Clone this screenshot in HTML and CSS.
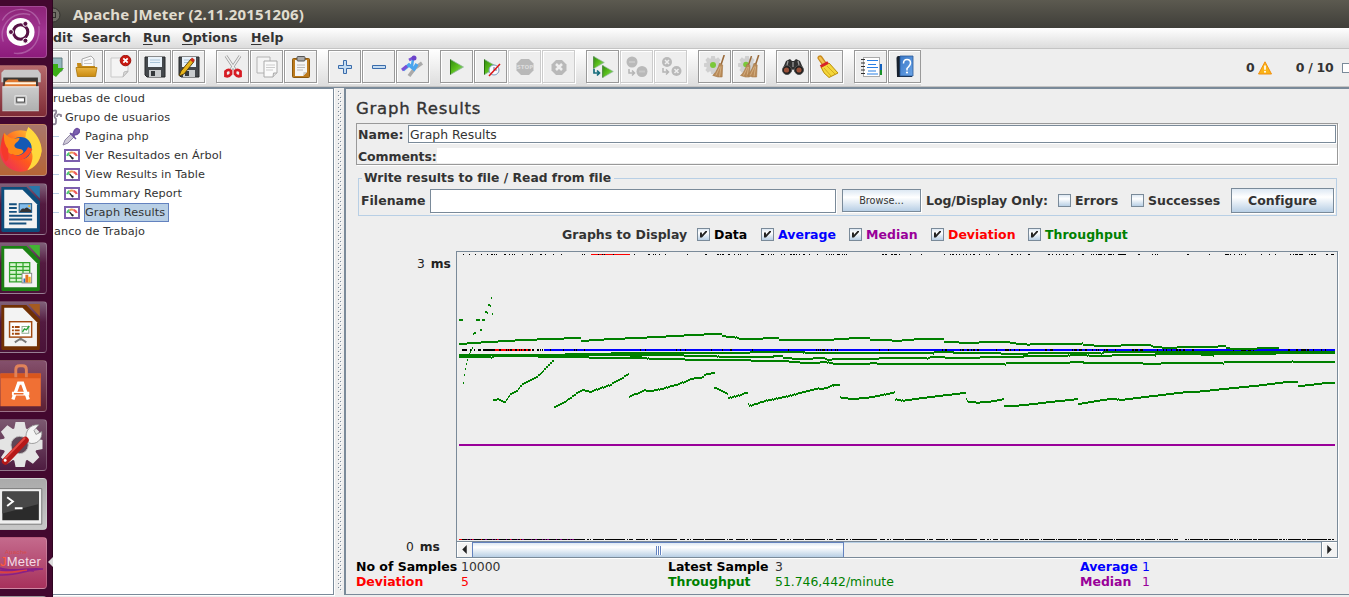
FILE: index.html
```html
<!DOCTYPE html>
<html lang="es">
<head>
<meta charset="utf-8">
<title>Apache JMeter (2.11.20151206)</title>
<link rel="stylesheet" href="styles.css">
</head>
<body>
<svg width="0" height="0" class="defs">
  <defs>
    <linearGradient id="gGreen" x1="0" y1="0" x2="1" y2="1"><stop offset="0" stop-color="#2f8a10"/><stop offset=".5" stop-color="#5cc01c"/><stop offset="1" stop-color="#9ad0a0"/></linearGradient>
    <linearGradient id="gFolder" x1="0" y1="0" x2="0" y2="1"><stop offset="0" stop-color="#eab544"/><stop offset="1" stop-color="#c98a10"/></linearGradient>
    <linearGradient id="gMetal" x1="0" y1="0" x2="0" y2="1"><stop offset="0" stop-color="#f2f2f2"/><stop offset="1" stop-color="#c4c4c4"/></linearGradient>
    <linearGradient id="gFox" x1="0" y1="1" x2="1" y2="0"><stop offset="0" stop-color="#e8226a"/><stop offset=".45" stop-color="#ff5a1c"/><stop offset="1" stop-color="#ffe03a"/></linearGradient>
    <linearGradient id="gBook" x1="0" y1="0" x2="1" y2="1"><stop offset="0" stop-color="#3a78c8"/><stop offset="1" stop-color="#6ba4e6"/></linearGradient>
    <pattern id="bumps" width="4" height="4" patternUnits="userSpaceOnUse"><path d="M0 0h1v1H0zM2 2h1v1H2z" fill="#7a8a99"/><path d="M1 1h1v1H1zM3 3h1v1H3z" fill="#fff"/></pattern>
    <symbol id="play" viewBox="0 0 14 16"><path d="M.5.5 13.5 8 .5 15.500z" fill="url(#gGreen)" stroke="#8fb89a" stroke-width=".8"/><path d="M.5 .5V15.500" stroke="#28700c" stroke-width="1"/></symbol>
    <symbol id="gauge" viewBox="0 0 16 13"><rect x="1" y="1" width="14" height="11" fill="#fff" stroke="#7d5fae" stroke-width="2"/><path d="M3.200 7A5 5 0 0 1 5.500 4" stroke="#4cc870" stroke-width="2.200" fill="none"/><path d="M5.500 4.200A5 5 0 0 1 9.500 3.900" stroke="#ee9a54" stroke-width="2" fill="none"/><path d="M9.500 3.900A5 5 0 0 1 12.800 7" stroke="#f05a5a" stroke-width="2.200" fill="none"/><path d="M5.500 6 8.500 9.500" stroke="#222" stroke-width="1.200"/><circle cx="8.600" cy="9.300" r="1.100" fill="#222"/></symbol>
    <symbol id="broom" viewBox="0 0 12 22"><path d="M11 0 8 9" stroke="#9a6a3a" stroke-width="1.500"/><path d="M6.500 8 9.500 9.500 9 21 5 21 0 19.500C3 17 5.500 12 6.500 8z" fill="#b98a58" stroke="#a57a48" stroke-width=".6"/><path d="M7 11 3 19.500M8 11 6.500 20.500" stroke="#dcbc90" stroke-width=".7"/></symbol>
    <symbol id="cog" viewBox="-10 -10 20 20"><g stroke="none"><circle r="7.500"/><path d="M-2-10h4l.8 4h-5.600zM-2 10h4l.8-4h-5.600zM-10-2v4l4 .8v-5.600zM10-2v4l-4 .8v-5.600z"/><path transform="rotate(45)" d="M-2-10h4l.8 4h-5.600zM-2 10h4l.8-4h-5.600zM-10-2v4l4 .8v-5.600zM10-2v4l-4 .8v-5.600z"/></g></symbol>
    <symbol id="floppy" viewBox="0 0 22 22"><path d="M1 1h20v20H3l-2-2z" fill="#44484c" stroke="#26282a"/><rect x="4" y="1" width="14" height="10" fill="#e9f2fa"/><path d="M6 4h10M6 6.500h10" stroke="#a9c4d8"/><path d="M5 14h12v7H5z" fill="#c9ccce"/><path d="M7 15h4v5H7z" fill="#35393c"/></symbol>
  </defs>
</svg>
<div class="screen">
  <nav class="launcher">
    <svg class="tile dash" viewBox="0 0 47 52"><path d="M3 36C-2 20 12 3 31 8M40 20c2 20-12 30-26 28M2 14C10-2 36-2 41 18" fill="none" stroke="#c88bc4" stroke-width="1.500" opacity=".5"/><circle cx="21" cy="26" r="14.500" fill="#fff"/><circle cx="21" cy="26" r="7.500" fill="none" stroke="#571245" stroke-width="3.200"/><g fill="#571245" stroke="#fff" stroke-width="1"><circle cx="11" cy="26" r="2.600"/><circle cx="26" cy="17.500" r="2.600"/><circle cx="26" cy="35" r="2.600"/></g></svg>
    <svg class="tile files" viewBox="0 0 47 52"><path d="M1 7 4 4h35l3 4v9H1z" fill="#c8c8c8"/><rect x="3" y="12" width="36" height="11" fill="#3b3834"/><path d="M5 16 8 14h10l1 2h18v6H4z" fill="#e07830"/><path d="M5 18h32" stroke="#fff3df" stroke-width="2"/><path d="M2 21h38v26H2z" fill="url(#gMetal)"/><path d="M2 22h38v24H2z" fill="#888" opacity=".35"/><rect x="15" y="31" width="12" height="9" rx="1" fill="#aaa" stroke="#ddd" stroke-width="1.500"/><rect x="17" y="33" width="8" height="4.500" fill="#fff" stroke="#444"/></svg>
    <svg class="tile fox" viewBox="0 0 47 52"><circle cx="21" cy="27" r="21.500" fill="url(#gFox)"/><path d="M29 2c8 6 14 15 14 25-2 12-8 18-15 20 6-8 7-16 3-22-5-6-7-12-2-23z" fill="#ffd83c"/><circle cx="21" cy="24" r="11.500" fill="#1459b4"/><path d="M4 8c3 4 6 6 11 6 2 0 4-1 5 0-1 4-7 5-5 9 3 3 8 1 9 5-3 4-10 5-15 1C2 24 1 15 4 8z" fill="#ff8a18"/><path d="M4 8C-1 18 0 30 5 38c5-1 3-8 3-13C4 20 3 14 4 8z" fill="#f5382c"/><path d="M11 32c8 5 16 1 20-8" fill="none" stroke="#ff4a22" stroke-width="5"/></svg>
    <svg class="tile office" viewBox="0 0 47 52"><path d="M1 3h26l14 15v30q0 2-2 2H3q-2 0-2-2z" fill="#0d4d7c"/><path d="M29 2h12v13z" fill="#2876a9"/><path d="M4 6h19l15 15v25H4z" fill="#f3f3f3"/><path d="M9 21h8M9 25h8M9 29h8M9 33h24M9 37h24M9 41h18" stroke="#15507e" stroke-width="2"/><rect x="19.500" y="20.500" width="13" height="9" fill="#83bdea" stroke="#15507e"/><path d="M20 29c3-6 5-2 6-4 2-2 3 1 6 2v2z" fill="#333"/><circle cx="30" cy="23" r="1.200" fill="#f5b532"/></svg>
    <svg class="tile office" viewBox="0 0 47 52"><path d="M1 3h26l14 15v30q0 2-2 2H3q-2 0-2-2z" fill="#1b8113"/><path d="M29 2h12v13z" fill="#43b334"/><path d="M4 6h19l15 15v25H4z" fill="#f3f3f3"/><rect x="9" y="20" width="22" height="20" fill="#d6f4ce"/><path d="M9.500 20.500h21v20h-21zM9 24.500h22M9 28.500h22M9 32.500h22M9 36.500h22M16.500 20v20M23.500 20v20" fill="none" stroke="#31a42a" stroke-width="1.300"/><rect x="22.500" y="31.500" width="10" height="10" fill="#fff" stroke="#888"/><path d="M24 41v-4h2v4z" fill="#2d72b8"/><path d="M26 41v-8h3v8z" fill="#e47222"/><path d="M29 41v-6h2.500v6z" fill="#f2b020"/></svg>
    <svg class="tile office" viewBox="0 0 47 52"><path d="M1 3h26l14 15v30q0 2-2 2H3q-2 0-2-2z" fill="#713004"/><path d="M29 2h12v13z" fill="#a55b22"/><path d="M4 6h19l15 15v25H4z" fill="#f3f3f3"/><path d="m15 42 6-4 6 4M21 37v3" fill="none" stroke="#777" stroke-width="2"/><rect x="9.500" y="20.500" width="23" height="16" fill="#fff" stroke="#a2480e" stroke-width="1.500"/><path d="M12 26h8M12 29.500h8M12 33h8" stroke="#a2480e" stroke-width="2" stroke-dasharray="2 1 8"/><rect x="22.500" y="25.500" width="7" height="7" fill="#fff" stroke="#8ba88b"/><path d="m23 31 2-3 2 1 3-4" fill="none" stroke="#26a337" stroke-width="1.500"/></svg>
    <svg class="tile soft" viewBox="0 0 47 52"><path d="M0 13h42v34H0z" fill="#f07034"/><path d="M0 13h42v5H0z" fill="#d9561d"/><path d="M16 17V9q0-4 4-4h3q4 0 4 4v8" fill="none" stroke="#e0825a" stroke-width="3"/><path d="m13 40 6-17h4l6 17" fill="none" stroke="#fff" stroke-width="3.500"/><path d="M12 34h18" stroke="#fff" stroke-width="4"/><path d="M14 34h10" stroke="#ec6a2c" stroke-width="1.500"/></svg>
    <svg class="tile gear" viewBox="0 0 47 52"><use href="#cog" x="-3" y="2" width="47" height="47" fill="#e4e4e4"/><circle cx="20" cy="26" r="9" fill="#5e4757" stroke="#bbb"/><path d="M27 20c-2-8 4-16 13-15l-5 6 2 4 6-3c1 9-6 14-13 12z" fill="#f4f4f4" stroke="#888" stroke-width=".8"/><path d="m5 43 21-22" stroke="#b51818" stroke-width="7" stroke-linecap="round"/><path d="m4 41 21-22" stroke="#e04a44" stroke-width="2" stroke-linecap="round"/><circle cx="5" cy="42" r="1.500" fill="#fff"/></svg>
    <svg class="tile term" viewBox="0 0 47 52"><path d="M-1 10h44v37H-1z" fill="#efefef" stroke="#777"/><path d="M2 13h38v30H2z" fill="#2b2b2b"/><path d="M2 13h38v13L2 36z" fill="#484848"/><path d="m7 19 6 4.500L7 28M15 30.500h8" fill="none" stroke="#fff" stroke-width="2"/></svg>
    <div class="tile jm"><small>Apache</small><span><i>J</i>Meter</span><svg viewBox="0 0 47 10"><path d="M0 1c12 5 28-1 43 1C30 2 16 9 0 8M0 3c14 3 20-1 34 1" fill="none" stroke="#872088" stroke-width="1.500"/><path d="M0 5c12 1 18-1 27-2" fill="none" stroke="#e0403c" stroke-width="1.500"/></svg></div>
    <svg class="tile disk" viewBox="0 0 47 52"><ellipse cx="20" cy="5" rx="16" ry="4" fill="#e0e0e0" stroke="#777"/></svg>
  </nav>
  <div class="window">
    <header class="title"><svg class="max" viewBox="0 0 16 16"><circle cx="8" cy="8" r="7" fill="#706e66" stroke="#34332f"/><rect x="5.500" y="5.500" width="5" height="5" fill="none" stroke="#32312d"/></svg>Apache JMeter (2.11.20151206)</header>
    <div class="menu"><span class="m0">dit</span><span class="m1">Search</span><span class="m2"><u>R</u>un</span><span class="m3"><u>O</u>ptions</span><span class="m4"><u>H</u>elp</span></div>
    <div class="toolbar">
      <div class="group">
        <b class="btn"><svg viewBox="0 0 24 24"><path d="M5 3h16v13H5z" fill="#93b8bd" stroke="#607b80"/><path d="M11 9h6v4h6l-8 9-9-6z" fill="#3cae16"/></svg></b>
        <b class="btn"><svg viewBox="0 0 24 24"><path d="M7 12V4l9-3 3 3v8z" fill="#fafafa" stroke="#aaa"/><path d="m9 6 7-2M9 8.500h8" stroke="#c4c4c4"/><path d="M2 8h4l1 3h13v10H3z" fill="#c58a18"/><path d="M1 12.500h21L20.500 21.500H2.500z" fill="url(#gFolder)" stroke="#a87408" stroke-width=".8"/></svg></b>
        <b class="btn"><svg viewBox="0 0 24 24"><path d="M2 3h17v14l-5 5H2z" fill="#f4f4f4" stroke="#c9c9c9"/><path d="m14 22 1-5 4-1z" fill="#ddd" stroke="#bbb"/><circle cx="16.500" cy="5.500" r="5.300" fill="#c81810" stroke="#9d120c"/><path d="m14.300 3.300 4.400 4.400m0-4.400-4.400 4.400" stroke="#fff" stroke-width="1.800"/></svg></b>
        <b class="btn"><svg viewBox="0 0 24 24"><use href="#floppy" x="1" y="1" width="22" height="22"/></svg></b>
        <b class="btn"><svg viewBox="0 0 24 24"><use href="#floppy" x="1" y="1" width="22" height="22"/><path d="M2 21 4 16 14 4l3 2.500L7 19z" fill="#e8b51c" stroke="#503a06" stroke-width=".9"/><path d="m13 5 2-2.500 3 2.500-2 2.500z" fill="#c92d1e"/></svg></b>
      </div>
      <div class="group">
        <b class="btn"><svg viewBox="0 0 24 24"><path d="M5 1 15 16M19 1 9 16" stroke="#999" stroke-width="3"/><path d="M5 1 15 16M19 1 9 16" stroke="#eee" stroke-width="1.400"/><path d="M4.500 16.500q3-3 5.500-.5v3q-2 3-5.500 2zM19.500 16.500q-3-3-5.500-.5v3q2 3 5.500 2z" fill="none" stroke="#d61c24" stroke-width="2.800"/></svg></b>
        <b class="btn"><svg viewBox="0 0 24 24"><path d="M2 2h13v16H2z" fill="#f4f4f4" stroke="#b2b2b2"/><path d="M9 6h13v12l-4 4H9z" fill="#fafafa" stroke="#aaa"/><path d="M11 10h9M11 12.500h9M11 15h7" stroke="#ccc"/><path d="m18 22 .500-4H22" fill="#ddd" stroke="#aaa"/></svg></b>
        <b class="btn"><svg viewBox="0 0 24 24"><rect x="3.500" y="3.500" width="17" height="19" rx="1" fill="#bc7a1c" stroke="#8b580e"/><path d="M6 5h12v12l-4 4H6z" fill="#f5f5f5"/><rect x="8" y="1.500" width="8" height="4.500" rx="1" fill="#aaa" stroke="#555"/><path d="M8 10h8M8 12.500h8M8 15h6" stroke="#bbb"/><path d="m14 21 .500-4H18z" fill="#ccc"/></svg></b>
      </div>
      <div class="group">
        <b class="btn"><svg viewBox="0 0 24 24"><path d="M10.500 5.500h3v5h5v3h-5v5h-3v-5h-5v-3h5z" fill="#c4dcf2" stroke="#3a6cab"/></svg></b>
        <b class="btn"><svg viewBox="0 0 24 24"><path d="M5.500 10.500h13v3h-13z" fill="#c4dcf2" stroke="#3a6cab"/></svg></b>
        <b class="btn"><svg viewBox="0 0 24 24"><path d="m8 21 6-8 7-5" stroke="#aaa" stroke-width="3.500" fill="none"/><path d="m2 15 6-5 5 4 3-5" fill="none" stroke="#4aa5ee" stroke-width="3.500"/><path d="m1 15 5-4M8 5l4-2" fill="none" stroke="#7a50d6" stroke-width="3"/><path d="m12 4-1 7" stroke="#4aa5ee" stroke-width="2.500"/><circle cx="13" cy="3" r="2.500" fill="#6c42ca"/></svg></b>
      </div>
      <div class="group">
        <b class="btn"><svg viewBox="0 0 24 24"><use href="#play" x="5" y="4" width="14" height="16"/></svg></b>
        <b class="btn"><svg viewBox="0 0 24 24"><use href="#play" x="5" y="4" width="14" height="16"/><circle cx="15" cy="15" r="5" fill="#f8fbff" stroke="#7d9cbe"/><path d="M15 12v3h3" fill="none" stroke="#668"/><path d="M10 21 21 9" stroke="#dc1414" stroke-width="1.500"/></svg></b>
        <b class="btn off"><svg viewBox="0 0 24 24"><path d="M8 4h8l4.500 4.500v7L16 20H8l-4.500-4.500v-7z" fill="#b9b9b9"/><text x="12" y="14.200" class="stop">STOP</text></svg></b>
        <b class="btn off"><svg viewBox="0 0 24 24"><path d="M9 5h6l4.500 4.500v6L15 20H9l-4.500-4.500v-6z" fill="#b9b9b9"/><path d="m9 9 6 6m0-6-6 6" stroke="#eee" stroke-width="2.500"/></svg></b>
      </div>
      <div class="group">
        <b class="btn"><svg viewBox="0 0 24 24"><use href="#play" x="2" y="1" width="12" height="13"/><use href="#play" x="11" y="10" width="12" height="13"/><path d="M3 14v4h5M6 15.500l2.500 2.500L6 20.500" fill="none" stroke="#176d7c" stroke-width="1.700"/></svg></b>
        <b class="btn off"><svg viewBox="0 0 24 24"><circle cx="7" cy="7" r="5.500" fill="#b9b9b9"/><circle cx="17" cy="16.500" r="5.500" fill="#b9b9b9"/><path d="M4 7h6M14 16.500h6" stroke="#c8c8c8" stroke-width="2"/><path d="M4 14v4h5M7 15.500l2.500 2.500L7 20.500" fill="none" stroke="#b5b5b5" stroke-width="1.500"/></svg></b>
        <b class="btn off"><svg viewBox="0 0 24 24"><circle cx="8" cy="7" r="5" fill="#b9b9b9"/><circle cx="17.500" cy="16" r="5" fill="#b9b9b9"/><path d="m6 5 4 4m0-4-4 4M15.500 14l4 4m0-4-4 4" stroke="#eee" stroke-width="1.500"/><path d="M4 13v4h5M7 14.500l2.500 2.500L7 19.500" fill="none" stroke="#b5b5b5" stroke-width="1.500"/></svg></b>
      </div>
      <div class="group">
        <b class="btn"><svg viewBox="0 0 24 24"><use href="#cog" x="1" y="1" width="18" height="18" fill="#d0d0d0"/><circle cx="10" cy="10" r="3" fill="#7ac83a"/><use href="#broom" x="8" y="0" width="16" height="23"/></svg></b>
        <b class="btn"><svg viewBox="0 0 24 24"><use href="#cog" x="1" y="1" width="18" height="18" fill="#d0d0d0"/><circle cx="9" cy="9.500" r="2.800" fill="#7ac83a"/><use href="#broom" x="3" y="1" width="13" height="22"/><use href="#broom" x="9" y="0" width="15" height="23"/></svg></b>
      </div>
      <div class="group">
        <b class="btn"><svg viewBox="0 0 24 24"><path d="m5 6 4-2 2 2h2l2-2 4 2 3 7-2 3-6 1-2-3-2 3-6-1-2-3z" fill="#303030"/><circle cx="6" cy="15" r="4.500" fill="#1e1e1e" stroke="#555"/><circle cx="18" cy="15" r="4.500" fill="#1e1e1e" stroke="#555"/><circle cx="5.500" cy="15" r="2.600" fill="#9a5038"/><circle cx="18" cy="15" r="2.600" fill="#9a5038"/><path d="m7 6-1 4m11-4 1 4M12 7v5" stroke="#999" stroke-width="1.300"/></svg></b>
        <b class="btn"><svg viewBox="0 0 24 24"><path d="M5 2.800 9 8.500" stroke="#c98a1c" stroke-width="5" stroke-linecap="round"/><path d="M5 3 9 8.500" stroke="#f2c050" stroke-width="2.500" stroke-linecap="round"/><path d="M6 12 14 8l9 10-9 4.500q-6-4-8-10.500z" fill="#f4d63a" stroke="#b98d08"/><path d="m9 13 7 8m-4-10 8 8" stroke="#d2ac1c"/><path d="m5.500 11.500 7.500-4" stroke="#d8232a" stroke-width="2.800"/></svg></b>
      </div>
      <div class="group">
        <b class="btn"><svg viewBox="0 0 24 24"><path d="M19 9h4v6h-4z" fill="#1260bc"/><path d="M19 15h4v5h-4z" fill="#18922a"/><rect x="4.500" y="2.500" width="16" height="19" fill="#fff" stroke="#aaa"/><path d="M8 5.500h11M9 9.500h8M8 12.500h11M9 16h8M8 19h11" stroke="#2a80e4" stroke-width="1.200"/><path d="M2 4.500h4M2 8h4M2 11.500h4M2 15h4M2 18.500h4" stroke="#333" stroke-width="1.200"/></svg></b>
        <b class="btn"><svg viewBox="0 0 24 24"><path d="M3.500 3q0-2 2-2H19v21H4z" fill="#17202d"/><path d="M7 1h13v20H7z" fill="url(#gBook)" stroke="#285898" stroke-width=".8"/><path d="M10.500 8.500q0-4 3.500-4t3.500 3.500q0 2-3.500 5.500v2" fill="none" stroke="#fff" stroke-width="1.500"/><circle cx="14" cy="17.500" r="1.100" fill="#fff"/></svg></b>
      </div>
      <div class="counts"><span>0</span><svg class="warn" viewBox="0 0 14 14"><path d="M7 .8 13.500 13H.5z" fill="#fab418" stroke="#f09010"/><path d="M7 4.500v4.300" stroke="#fff" stroke-width="1.700"/><circle cx="7" cy="10.800" r="1" fill="#fff"/></svg><span class="threads">0 / 10</span><i class="led"></i></div>
    </div>
    <div class="body">
      <aside class="tree">
        <div class="node root">ruebas de cloud</div>
        <div class="node users"><svg viewBox="0 0 9 17"><path d="M0 2q4-2 3 2-3 3 0 6v3q0 3-3 2M4 8q0-4 4-2v2" fill="none" stroke="#8c8496" stroke-width="1.800"/></svg>Grupo de usuarios</div>
        <div class="node leaf"><svg viewBox="0 0 18 19"><path d="m1 18 2-5 7-7 3 3-7 7z" fill="#cfcad8" stroke="#8f86a4"/><path d="m8 6 6 6M11 8q1-6 4-6.500 4 1 2 4-2 3-6 2.500z" fill="#7d60b0" stroke="#6d50a2" stroke-width="1.500"/></svg><span>Pagina php</span></div>
        <div class="node leaf"><svg class="gg"><use href="#gauge"/></svg><span>Ver Resultados en Árbol</span></div>
        <div class="node leaf"><svg class="gg"><use href="#gauge"/></svg><span>View Results in Table</span></div>
        <div class="node leaf"><svg class="gg"><use href="#gauge"/></svg><span>Summary Report</span></div>
        <div class="node leaf"><svg class="gg"><use href="#gauge"/></svg><span class="sel">Graph Results</span></div>
        <div class="node bench">anco de Trabajo</div>
      </aside>
      <div class="divider"><svg><rect width="100%" height="100%" fill="url(#bumps)"/></svg></div>
      <main class="panel">
        <h1>Graph Results</h1>
        <section class="ident">
          <div class="row"><label>Name:</label><div class="field">Graph Results</div></div>
          <div class="row second"><label>Comments:</label><div class="plain"></div></div>
        </section>
        <fieldset class="file">
          <legend>Write results to file / Read from file</legend>
          <label class="fn">Filename</label><div class="field path"></div>
          <div class="button browse">Browse...</div>
          <span class="only">Log/Display Only:</span>
          <i class="cb"></i><span class="err">Errors</span>
          <i class="cb"></i><span class="suc">Successes</span>
          <div class="button conf">Configure</div>
        </fieldset>
        <div class="legend">
          <span class="lead">Graphs to Display</span>
          <span class="opt data"><i class="cb on"></i>Data</span>
          <span class="opt avg"><i class="cb on"></i>Average</span>
          <span class="opt med"><i class="cb on"></i>Median</span>
          <span class="opt dev"><i class="cb on"></i>Deviation</span>
          <span class="opt thr"><i class="cb on"></i>Throughput</span>
        </div>
        <div class="chart">
          <div class="axis"><div class="top">3 <b>ms</b></div><div class="bot">0 <b>ms</b></div></div>
          <div class="plot">
            <svg class="graph" viewBox="21 21 2640 867" shape-rendering="crispEdges"><g id="marks"></g></svg>
            <div class="scroll"><span class="arrow"><svg viewBox="0 0 5 10"><path d="M5 0v10L0 5z"/></svg></span><div class="thumb"><i></i></div><div class="track"></div><span class="arrow right"><svg viewBox="0 0 5 10"><path d="M0 0v10l5-5z"/></svg></span></div>
          </div>
        </div>
        <div class="stats">
          <b>No of Samples</b><span>10000</span><b>Latest Sample</b><span>3</span><b class="avg">Average</b><span class="avg">1</span>
          <b class="dev">Deviation</b><span class="dev">5</span><b class="thr">Throughput</b><span class="thr">51.746,442/minute</span><b class="med">Median</b><span class="med">1</span>
        </div>
      </main>
    </div>
  </div>
</div>
<script src="graph.js"></script>
</body>
</html>
```

FILE: graph.js
```js
// Plot units are thirds of a pixel, so every mark is a multiple of 3.
const marks = document.getElementById('marks');
function path(d, color, width) {
  const p = document.createElementNS('http://www.w3.org/2000/svg', 'path');
  p.setAttribute('d', d);
  p.setAttribute('stroke', color);
  p.setAttribute('stroke-width', width);
  p.setAttribute('fill', 'none');
  marks.appendChild(p);
}
// Each entry is "x" for one sample or "x+w" for a run.
function runs(list, y, color, width) {
  path(list.split(' ').map(s => {
    const [x, w] = s.split('+').map(Number);
    return `M${Math.round(x / 3) * 3} ${y}h${w || 3}`;
  }).join(''), color, width);
}
// Throughput values snap to whole pixels and are two pixels tall.
// Every other sample sits slightly lower, which gives slopes a serrated edge.
function series(points) {
  let d = '';
  for (let i = 0; i < points.length - 1; i++) {
    const [x0, y0] = points[i], [x1, y1] = points[i + 1];
    const wobble = Math.abs((y1 - y0) / (x1 - x0)) > .2 ? 1.5 : 0;
    for (let x = x0; x < x1; x += 3) {
      const col = Math.round(x / 3);
      const y = y0 + (y1 - y0) * (x - x0) / (x1 - x0) + (col % 2) * wobble;
      d += `M${col * 3} ${Math.round(y / 3) * 3}h3`;
    }
  }
  path(d, '#008000', 6);
}
runs('423+117', 28.5, '#f00', 3);
runs('39 57 75 93 111 123+6 132 138 162+6 177 186 192 216 240 246 270+6 285 309 333 396 402 444 456 462 489 552 594+6 609 615 627 645 711 765+6 801+6 810 816+6 834+6 852 864 870 891 933+9 954 963 969 993 1002 1020+6 1029+6 1038 1047 1059+6 1077 1101 1128 1137 1143 1149 1161+9 1176 1182 1188 1296+6 1305+6 1323+6 1332+9 1347 1380 1413 1482 1500 1506+6 1518 1527 1539 1548 1560 1569+6 1587 1608 1617 1644 1683+6 1701 1710 1734+6 1794+6 1806 1818 1827 1839 1848+6 1869 1896+6 1923 1929 1938 1944+12 1962 1974+12 1989 2004+24 2064+6 2106 2115 2121 2211+6 2277 2325+12 2340 2352 2367 2373 2385 2433 2457 2475 2520 2529 2535+9 2547+12 2577 2583+6 2592+6 2628+6 2643+9', 28.5, '#000', 3);
// Average line
path('M282 315H2655', '#00f', 6);
path('M135 315H243', '#f00', 6);
runs('36+15 60+6 72 84+9 99+36 147+6 168 174 180+6 195+6 207 213 222+6 234+6 246+6 261+6 270 276 300 339 372 378 402 570 585 678 690 705 783 816 840+6 906 1014 1098 1104 1110 1116+9 1131 1143 1155 1161 1287 1314 1476 1485+6 1530 1536+6 1551+6 1563 1569+6 1581+6 1638 1665+12 1680 1692 1707 1785+6 1800+9 1866 1872+9 1887+9 1905+6 1926 1938 1944 1962 1968+6 1995 2046+6 2055+9 2070+9 2121 2139 2148 2163 2178+6 2187+6 2199+6 2226+6 2349 2373+15 2394+9 2409 2514+6 2538+6 2553+6 2559+9 2571+6 2589 2613 2625', 315, '#000', 6);
// Median line
path('M27 600H2655', '#990099', 6);
// Bottom samples
path('M27 883.500H390', '#800080', 3);
runs('27+12 57 66 90+6 102 141 180 210', 883.5, '#f00', 3);
path('M36 883.500H390', '#000', 3);
marks.lastChild.setAttribute('stroke-dasharray', '15 3 6 3 3 6 21 3 9 6');
path('M390 883.500H1645', '#000', 3);
marks.lastChild.setAttribute('stroke-dasharray', '15 6 6 3 3 6 33 3 60 6 3 3 12 9 27 3 6 6 3 3 75 9');
path('M1650 883.500H2184', '#000', 3);
marks.lastChild.setAttribute('stroke-dasharray', '57 3 12 3 9 3 30 6 3 3 36 3 3 3');
path('M2205 883.500H2655', '#000', 3);
marks.lastChild.setAttribute('stroke-dasharray', '6 3 3 3 39 3 12 3 60 3 9 3');
// Throughput: isolated start-up samples
runs('27+12 78+12 96+9', 225, '#008000', 6);
runs('39', 414, '#008000', 6); runs('42', 390, '#008000', 6);
runs('45', 372, '#008000', 6); runs('48', 357, '#008000', 6);
runs('51', 345, '#008000', 6); runs('57', 327, '#008000', 6);
runs('60', 321, '#008000', 6); runs('63', 315, '#008000', 6);
runs('66', 309, '#008000', 6); runs('69', 267, '#008000', 6);
runs('72+6', 264, '#008000', 6); runs('90+6', 255, '#008000', 6);
runs('105+6', 201, '#008000', 6); runs('111', 204, '#008000', 6);
runs('114+6', 180, '#008000', 6); runs('120', 183, '#008000', 6);
runs('123', 159, '#008000', 6); runs('126', 207, '#008000', 6);
// Throughput: continuous bands
[
  [[27,297],[99,292],[219,285],[354,280],[393,279]],
  [[393,288],[468,283],[600,277],[726,270],[795,267],[816,267]],
  [[816,274],[855,276],[870,282],[960,280],[987,279]],
  [[987,285],[1143,284],[1218,279],[1260,279]],
  [[1260,285],[1302,286],[1350,287],[1355,285],[1425,282],[1482,282]],
  [[1482,291],[1570,294],[1600,291],[1674,291],[1680,288]],
  [[1680,294],[1734,299],[1752,297],[1890,297],[1899,294]],
  [[1899,300],[1965,303],[2025,301],[2100,300],[2113,306],[2160,309],[2200,306],[2298,305],[2310,303],[2328,303]],
  [[2328,309],[2350,312],[2445,310],[2487,309]],
  [[27,331],[345,330],[560,325],[680,325],[895,323],[900,321],[1060,321],[1068,324],[1450,324],[1455,321],[1510,321],[1515,324],[1650,325],[1660,327],[1725,327],[1740,324],[1953,324],[1960,321],[2655,321]],
  [[27,336],[123,336],[130,333],[264,333],[420,329],[600,330],[800,333],[810,336],[965,335],[970,332],[995,333],[998,339],[1047,342],[1125,339],[1130,345],[1158,342],[1285,341],[1288,339],[1430,339],[1440,336],[1485,336],[1490,339],[1585,339],[1590,336],[1715,335],[1720,332],[1850,332],[1860,329],[1910,330],[1920,333],[1980,332],[1985,330],[2115,330],[2120,327],[2250,327],[2260,330],[2290,330],[2295,326],[2655,325]],
  [[264,336],[415,337],[420,339],[590,339],[600,342],[705,343],[710,345],[900,345],[905,348],[1010,349],[1065,354],[1100,353],[1130,351],[1155,357],[1250,357],[1265,354],[1290,357],[1665,357],[1668,354],[1855,354],[1860,351],[1900,351],[1905,354],[2075,354],[2080,357],[2130,357],[2133,354],[2318,354],[2321,351],[2520,351],[2526,348],[2532,351],[2655,351]],
  [[540,333],[610,330]], [[345,327],[620,324]], [[2115,327],[2420,325]],
  [[129,465],[147,462],[162,470],[168,466],[180,448],[201,437],[213,420],[243,402],[252,400],[270,386],[312,342]],
  [[312,486],[345,469],[387,439],[400,434],[420,440],[450,429],[480,419],[510,401],[537,386]],
  [[537,454],[582,436],[600,438],[639,430],[690,415],[720,402],[750,398],[770,387],[792,384]],
  [[792,429],[807,432],[834,447]], [[834,458],[870,450],[894,440]],
  [[894,478],[898,482],[950,466],[1020,451],[1104,429],[1116,432],[1150,420],[1170,420]],
  [[1170,456],[1180,459],[1210,462],[1260,457],[1300,449],[1335,441]],
  [[1335,462],[1359,467],[1410,460],[1450,455],[1500,449],[1548,443]],
  [[1548,462],[1553,470],[1580,473],[1620,470],[1662,462]],
  [[1662,483],[1700,482],[1740,478],[1800,471],[1884,462]],
  [[1884,477],[1920,471],[1962,464],[1998,461],[2010,465],[2100,454],[2210,441],[2235,441],[2310,433],[2430,421],[2500,412],[2544,411]],
  [[2544,423],[2570,421],[2600,417],[2634,413],[2655,413]]
].forEach(series);
```

FILE: styles.css
```css
* { box-sizing: border-box; }
body { margin: 0; overflow: hidden; font: bold 12.5px/16px "DejaVu Sans", sans-serif; letter-spacing: .01px; color: #333; white-space: nowrap; }
.defs { position: absolute; }
.screen { display: flex; width: 1349px; height: 597px; overflow: hidden; background: #eee; }
i { font-style: normal; }

.launcher { width: 53px; flex: none; background: #43082f; padding-top: 6px; display: flex; flex-direction: column; gap: 7px; position: relative; border-right: 1px solid #2f0521; }
.tile { width: 47px; height: 52px; flex: none; display: block; border-radius: 0 4px 4px 0; border: 1px solid rgba(255,255,255,.2); border-left: 0; background: #5c2448; }
.dash { background: linear-gradient(#8d2478, #a13391 50%, #8d1b7c); }
.files { background: linear-gradient(#b66a6c, #7e2b36); }
.fox { background: linear-gradient(#a8776c, #b66536); }
.office { background: linear-gradient(#80617a, #531a40 40%, #4a1238); }
.soft { background: linear-gradient(#84506c, #5c1f33); }
.gear { background: linear-gradient(#7b5870, #4e1b40); }
.term { background: linear-gradient(#aaa, #c7c7c7); }
.jm { background: linear-gradient(#c46a8c, #a7315c); color: #f4dce6; font: 13px/14px "Liberation Sans", sans-serif; letter-spacing: .2px; padding-top: 11px; overflow: hidden; }
.jm span, .jm small, .jm svg { display: block; }
.jm small { font-size: 6px; line-height: 6px; padding-left: 5px; color: #d84a4a; letter-spacing: .3px; }
.jm i { color: #ff5a3c; }
.jm svg { width: 47px; height: 10px; margin-top: -2px; }
.disk { border-color: #999; background: #3a3036; }
.launcher::after { content: ""; position: absolute; right: -1px; top: 557px; border: 5px solid transparent; border-right-color: #ddd; border-left: 0; }

.window { flex: 1; min-width: 0; display: flex; flex-direction: column; }
.title { height: 28px; flex: none; background: linear-gradient(#5c5a50, #3f3e39); color: #e0dccf; font: bold 15px/28px "Noto Sans", "Open Sans", sans-serif; letter-spacing: .16px; display: flex; }
.max { width: 16px; height: 16px; margin: 7px 12px 0 -8px; }
.menu { height: 21px; flex: none; background: linear-gradient(#fff, #dcdcdc); border-bottom: 1px solid #c4c4c4; display: flex; line-height: 20px; letter-spacing: .12px; }
.menu span { flex: none; }
.menu u { text-underline-offset: 2px; }
.m0 { width: 29px; }
.m1 { width: 61px; }
.m2 { width: 39px; }
.m3 { width: 69px; }
.toolbar { height: 38px; flex: none; padding-top: 1px; background: linear-gradient(#fff, #ddd); display: flex; gap: 11px; border-bottom: 1px solid #c4c4c4; overflow: hidden; }
.group { display: flex; gap: 1px; flex: none; }
.group:first-child { margin-left: -17px; }
.btn { width: 33px; height: 33px; border: 1px solid #999; background: #eee; box-shadow: inset 1px 1px #fff, 1px 1px #fff; padding: 4px 3px 3px 4px; }
.btn svg { display: block; width: 24px; height: 24px; }
.off { border-color: #ccc; }
.stop { font: bold 5.5px "DejaVu Sans", sans-serif; fill: #ddd; text-anchor: middle; letter-spacing: 0; }
.counts { flex: 1; margin: -1px 0 0 -11px; background: #eee; display: flex; align-items: center; padding: 1px 0 0 325px; }
.warn { width: 14px; height: 14px; margin-left: 3px; flex: none; }
.threads { margin-left: 24px; width: 46px; flex: none; letter-spacing: -.3px; }
.led { width: 14px; height: 10px; border: 1px solid #7a8a99; background: #fff; flex: none; }

.body { flex: 1; min-height: 0; display: flex; border-top: 1px solid #7a8a99; }
.tree { width: 281px; flex: none; background: #fff; height: 507px; border: 1px solid #7a8a99; border-left: 0; font-weight: normal; font-size: 11.3px; letter-spacing: .1px; box-shadow: 1px 1px #fff; }
.node { height: 19px; line-height: 19px; display: flex; align-items: center; }
.users svg { width: 9px; height: 17px; margin-right: 3px; }
.leaf::before { content: ""; width: 6px; height: 1px; background: #b8cfe5; }
.leaf svg { width: 18px; height: 19px; margin: 0 4px 0 3px; }
.leaf svg.gg { width: 16px; height: 13px; margin: 0 4px 0 5px; }
.leaf span { border: 1px solid transparent; line-height: 17px; }
.leaf .sel { background: #b8cfe5; border-color: #6382bf; padding-right: 3px; }
.bench { padding-left: 1px; }
.divider { width: 10px; flex: none; padding: 3px 2px 0 4px; }
.divider svg { display: block; width: 4px; height: 500px; }
.panel { flex: 1; min-width: 0; height: 507px; border: solid #7a8a99; border-width: 1px 0 1px 2px; padding: 8px 11px 0 10px; display: flex; flex-direction: column; }
h1 { margin: 0; font: 16.5px/22px "DejaVu Sans", sans-serif; letter-spacing: .75px; -webkit-text-stroke: .35px #333; padding-top: 1px; }
.ident { margin-top: 3px; height: 42px; flex: none; border: 1px solid #999; box-shadow: 1px 1px #fff; }
.row { display: flex; padding: 1px 1px 0; }
.row label { padding-top: 2px; width: 50px; }
.field { flex: 1; height: 18px; background: #fff; border: 1px solid #7a8a99; box-shadow: 1px 1px #fff; font-weight: normal; font-size: 12.4px; line-height: 18px; padding-left: 1px; }
.second { padding: 5px 0 0 1px; }
.second label { width: 79px; padding-top: 1px; letter-spacing: -.1px; }
.plain { flex: 1; height: 15px; background: #fff; }
.file { height: 46px; flex: none; margin: 5px 1px 0 2px; min-width: 0; padding: 6px 2px 0; border: 1px solid #b8cfe5; display: flex; align-items: center; }
.file legend { padding: 0 3px 0 2px; margin: 0 0 -4px 1px; height: 16px; font-size: 12.3px; letter-spacing: .02px; line-height: 17px; }
.fn { width: 69px; }
.path { flex: none; width: 406px; height: 24px; }
.button { border: 1px solid #7a8a99; background: linear-gradient(#dde8f3, #fff 35%, #b8cfe5); text-align: center; box-shadow: 1px 1px #fff; flex: none; }
.browse { width: 79px; height: 23px; line-height: 22px; margin-left: 6px; font-weight: normal; font-size: 9.700px; }
.only { margin-left: 5px; width: 132px; letter-spacing: -.05px; }
.cb { width: 13px; height: 13px; flex: none; border: 1px solid #7a8a99; background: linear-gradient(#dde8f3, #fff 35%, #b8cfe5); display: inline-block; position: relative; }
.on::after { content: ""; position: absolute; left: 2px; top: 2px; width: 7px; height: 7px; background: #222; clip-path: polygon(0 30%, 28% 30%, 28% 60%, 85% 0, 100% 0, 100% 20%, 28% 100%, 0 100%); }
.err { margin-left: 4px; width: 56px; }
.suc { margin-left: 4px; width: 83px; }
.conf { width: 103px; height: 25px; line-height: 24px; }
.legend { display: flex; height: 16px; line-height: 17px; margin: 10px 0 0 206px; flex: none; }
.lead { width: 135px; }
.opt { display: flex; align-items: center; gap: 4px; }
.opt.data { width: 64px; }
.opt.avg { width: 88px; }
.opt.med { width: 82px; }
.opt.dev { width: 97px; }
.data { color: #000; }
.avg { color: #00f; }
.med { color: #909; }
.dev { color: #f00; }
.thr { color: #008000; }
.chart { display: flex; margin-top: 9px; height: 307px; flex: none; }
.axis { width: 100px; display: flex; flex-direction: column; justify-content: space-between; padding: 5px 0 3px; font-weight: normal; font-size: 12.3px; color: #222; word-spacing: 2px; }
.top { padding-left: 61px; }
.bot { padding-left: 50px; }
.plot { flex: 1; border: 1px solid #7a8a99; box-shadow: 1px 1px #fff; display: flex; flex-direction: column; }
.graph { width: 880px; height: 289px; display: block; }
.scroll { height: 16px; border-top: 1px solid #7a8a99; display: flex; }
.arrow { width: 15px; display: flex; align-items: center; justify-content: center; background: #f3f3f3; box-shadow: inset 1px 1px #fff; }
.arrow svg { width: 5px; height: 9px; fill: #222; }
.right { width: 16px; border-left: 1px solid #7a8a99; }
.thumb { width: 372px; border: 1px solid #6382bf; border-bottom: 0; background: linear-gradient(#dde8f3, #fff 30%, #b8cfe5); display: flex; align-items: center; justify-content: center; }
.thumb i { width: 6px; height: 9px; margin-left: 2px; background: repeating-linear-gradient(90deg, #6382bf 0 1px, #fff 1px 2px); }
.track { flex: 1; border-top: 1px solid #b8cfe5; }
.stats { display: grid; grid-template-columns: 105px 207px 107px 305px 62px 60px; line-height: 15px; margin-top: 1px; color: #000; }
.stats b { letter-spacing: -.02px; }
.stats span { font-weight: normal; font-size: 12.4px; letter-spacing: 0; }
.stats b:not([class]) { color: #000; }
.stats span:not([class]) { color: #333; }
.stats .avg { color: #00f; }
.stats .med { color: #909; }
.stats .dev { color: #f00; }
.stats .thr { color: #008000; }
```
